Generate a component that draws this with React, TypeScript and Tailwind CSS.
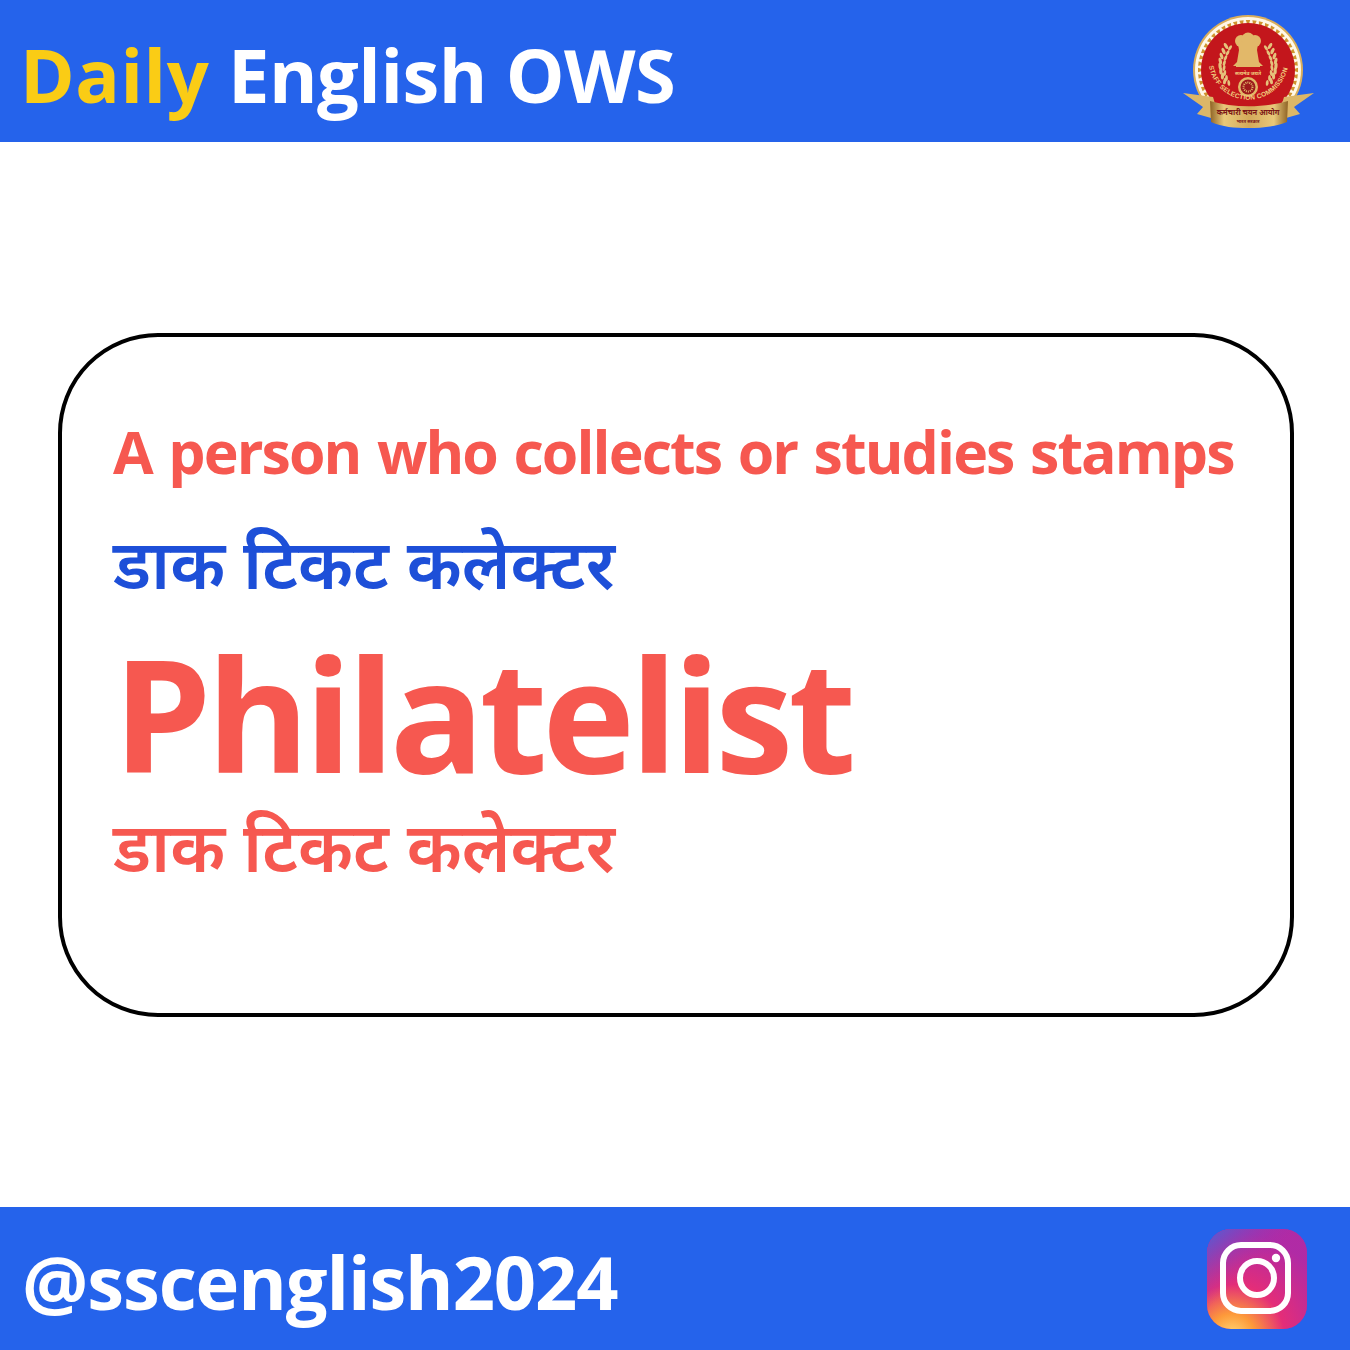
const fontClassName = "font-['Open_Sans','Noto_Sans',sans-serif]";
const hindiText = "डाक टिकट कलेक्टर";

const sunRays = Array.from({ length: 48 }, (_, i) => (i * 360) / 48);
const wreathLeaves = [0, 1, 2, 3, 4, 5, 6, 7];

const SscEmblem = () => (
  <svg width="160" height="130" viewBox="0 0 160 130" className="shrink-0">
    <defs>
      <linearGradient id="ribbon" x1="0" x2="1" y1="0" y2="0">
        <stop offset="0" stopColor="#8f6426" />
        <stop offset="0.18" stopColor="#e9c87a" />
        <stop offset="0.5" stopColor="#d3a95a" />
        <stop offset="0.82" stopColor="#e9c87a" />
        <stop offset="1" stopColor="#8f6426" />
      </linearGradient>
      <path id="ringText" d="M 39 60 A 40 40 0 0 0 118 60" fill="none" />
    </defs>
    <circle cx="78" cy="64" r="55" fill="#d9ae5c" />
    <circle cx="78" cy="64" r="53" fill="#fff8e8" />
    {sunRays.map((angle) => (
      <path key={angle} d="M75.8 14h4.4l-2.2 7z" fill="#d0952f" transform={`rotate(${angle} 78 64)`} />
    ))}
    <circle cx="78" cy="64" r="47" fill="#c3161c" />
    <g fill="#e2b869">
      <circle cx="71" cy="35" r="6" />
      <circle cx="85" cy="35" r="6" />
      <circle cx="78" cy="33" r="6.5" />
      <path d="M68 38h20l-1 6 2 12 4 4H63l4-4 2-12z" />
      <rect x="66" y="59" width="24" height="2" />
    </g>
    {wreathLeaves.map((i) => (
      <g key={i} fill="#e5c27b">
        <ellipse cx={56 - Math.sin(i * 0.42) * 6} cy={40 + i * 5} rx="1.6" ry="3.4" transform={`rotate(${-30 + i * 6} ${56 - Math.sin(i * 0.42) * 6} ${40 + i * 5})`} />
        <ellipse cx={60 - Math.sin(i * 0.42) * 6} cy={42 + i * 5} rx="1.4" ry="3" transform={`rotate(${35 - i * 6} ${60 - Math.sin(i * 0.42) * 6} ${42 + i * 5})`} />
        <ellipse cx={100 + Math.sin(i * 0.42) * 6} cy={40 + i * 5} rx="1.6" ry="3.4" transform={`rotate(${30 - i * 6} ${100 + Math.sin(i * 0.42) * 6} ${40 + i * 5})`} />
        <ellipse cx={96 + Math.sin(i * 0.42) * 6} cy={42 + i * 5} rx="1.4" ry="3" transform={`rotate(${-35 + i * 6} ${96 + Math.sin(i * 0.42) * 6} ${42 + i * 5})`} />
      </g>
    ))}
    <text x="78" y="69" textAnchor="middle" fontSize="5" fontWeight="700" fill="#f1cf7f" fontFamily="Noto Sans, sans-serif">
      सत्यमेव जयते
    </text>
    <circle cx="78" cy="81" r="10" fill="#e2b869" />
    <circle cx="78" cy="81" r="7.5" fill="#9c1a1c" />
    <circle cx="78" cy="81" r="4.5" fill="none" stroke="#e2b869" strokeWidth="2" strokeDasharray="1 1" />
    <text fontSize="6.6" fontWeight="700" fill="#f1cf7f" fontFamily="Liberation Sans, sans-serif" letterSpacing="0.2">
      <textPath href="#ringText">STAFF SELECTION COMMISSION</textPath>
    </text>
    <path d="M13 87l30 4 3 10 2 13-21-6 6-7z" fill="#dcb768" />
    <path d="M144 87l-30 4-3 10-2 13 21-6-6-7z" fill="#dcb768" />
    <path d="M40 95c24 7 53 7 78 0l-1 21c-12 5-26 6-39 6s-26-1-37-6z" fill="url(#ribbon)" />
    <text x="78" y="109" textAnchor="middle" fontSize="7.5" fontWeight="700" fill="#7b1616" fontFamily="Noto Sans, sans-serif">
      कर्मचारी चयन आयोग
    </text>
    <text x="78" y="117" textAnchor="middle" fontSize="4.5" fontWeight="700" fill="#7b1616" fontFamily="Noto Sans, sans-serif">
      भारत सरकार
    </text>
  </svg>
);

const InstagramIcon = () => (
  <svg width="100" height="100" viewBox="0 0 100 100" className="shrink-0">
    <defs>
      <radialGradient id="igWarm" cx="0.25" cy="1.08" r="1.05">
        <stop offset="0" stopColor="#ffdd7a" />
        <stop offset="0.22" stopColor="#fd9a3a" />
        <stop offset="0.5" stopColor="#e42d78" />
        <stop offset="1" stopColor="#b22aa4" stopOpacity="0.9" />
      </radialGradient>
      <linearGradient id="igCool" x1="0" x2="0.4" y1="0" y2="0.45">
        <stop offset="0" stopColor="#4a63d8" />
        <stop offset="1" stopColor="#a02fb0" stopOpacity="0" />
      </linearGradient>
    </defs>
    <rect width="100" height="100" rx="24" fill="#a32fb0" />
    <rect width="100" height="100" rx="24" fill="url(#igWarm)" />
    <rect width="100" height="100" rx="24" fill="url(#igCool)" />
    <rect x="16" y="16" width="65" height="66" rx="18" fill="none" stroke="#fff" strokeWidth="6" />
    <circle cx="50" cy="49" r="17" fill="none" stroke="#fff" strokeWidth="6" />
    <circle cx="69" cy="29" r="4.2" fill="#fff" />
  </svg>
);

const App = () => {
  return (
    <div className={`flex h-[1350px] w-[1350px] flex-col bg-white ${fontClassName}`}>
      <header className="flex h-[142px] shrink-0 items-center justify-between bg-[#2563eb] pl-[20px] pr-[20px]">
        <h1 className="mt-[7px] text-[74px] leading-none font-bold tracking-[-0.5px] text-white">
          <span className="tracking-[0.5px] text-[#facc15]">Daily</span> English OWS
        </h1>
        <SscEmblem />
      </header>

      <main className="flex flex-1 items-center pl-[58px]">
        <section className="flex h-[684px] w-[1236px] shrink-0 flex-col rounded-[100px] border-4 border-black pl-[51px] pt-[76px]">
          <p className="text-[59px] leading-[76px] font-bold tracking-[-1.9px] [word-spacing:3px] text-[#f65850]">
            A person who collects or studies stamps
          </p>
          <p className="mt-[29px] text-[68.3px] leading-[90px] font-semibold text-[#1d4fd8]">{hindiText}</p>
          <p className="mt-[24px] text-[157px] leading-[160px] font-bold tracking-[-5.2px] text-[#f65850]">
            Philatelist
          </p>
          <p className="mt-[9px] text-[68.3px] leading-[90px] font-semibold text-[#f65850]">{hindiText}</p>
        </section>
      </main>

      <footer className="flex h-[143px] shrink-0 items-center justify-between bg-[#2563eb] pl-[22px] pr-[43px]">
        <span className="mt-[6px] text-[74px] leading-none font-bold tracking-[-1.1px] text-white">@sscenglish2024</span>
        <InstagramIcon />
      </footer>
    </div>
  );
};

export default App;
